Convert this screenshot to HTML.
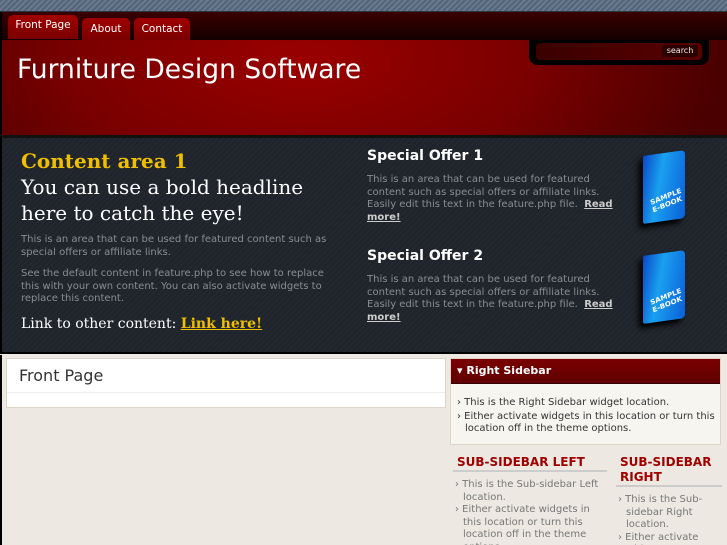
<!DOCTYPE html>
<html style="overflow:hidden;height:545px"><head><style>
*{margin:0;padding:0;box-sizing:border-box}
body{width:727px;height:545px;overflow:hidden;background:#ede9e2;font-family:"DejaVu Sans","Liberation Sans",sans-serif;position:relative}
.abs{position:absolute}
#stripe{left:0;top:0;width:727px;height:12px;background:repeating-linear-gradient(135deg,#52637a 0 2px,#6a7a8e 2px 4px);border-bottom:1px solid #2a3340}
#nav{left:0;top:12px;width:727px;height:28px;background:linear-gradient(#3a0000,#140000);border-left:2px solid #000}
.tab{position:absolute;color:#fff;font-size:10.5px;border-radius:5px 5px 0 0;background:linear-gradient(#a00000,#7a0000);text-align:center}
#head{left:0;top:40px;width:727px;height:98px;background:radial-gradient(ellipse 420px 200px at 300px 20px,#9a0000,#7a0000 55%,#4a0000 100%);border-left:2px solid #000;border-bottom:3px solid #111}
#title{left:17px;top:54px;color:#fff;font-size:26.5px}
#sbox{left:529px;top:40px;width:180px;height:25px;background:#000;border-radius:0 0 9px 9px}
#sin{left:536px;top:43px;width:166px;height:17px;background:linear-gradient(90deg,#3a0000,#5a0000);border-radius:4px}
#sbtn{left:662px;top:45px;width:36px;height:12px;background:#2a0000;color:#eee;font-size:8px;text-align:center;line-height:12px;border-radius:2px}
#feat{left:0;top:138px;width:727px;height:216px;background:repeating-linear-gradient(135deg,#23272f 0 2px,#1f232a 2px 4px);border-left:2px solid #000;border-bottom:2px solid #000}
.serif{font-family:"DejaVu Serif","Liberation Serif",serif}
.g{color:#8a8d93;font-size:10px;line-height:12.5px}
.so{color:#fff;font-weight:bold;font-size:14px}
.book{position:absolute;width:42px;height:68px;background:linear-gradient(100deg,#0a48c8,#1aa0f0 40%,#0a60d8);transform:skewY(-8deg);border-radius:2px 4px 4px 2px;box-shadow:-4px 4px 6px #000}
.book span{position:absolute;left:8px;top:40px;color:#fff;font-size:7px;font-weight:bold;line-height:8px;transform:rotate(-15deg)}
#fp{left:6px;top:358px;width:440px;height:50px;background:#fff;border:1px solid #ddd5c8}
#fp h2{font-weight:normal;font-size:16px;color:#333;padding:7px 0 0 12px;height:34px;border-bottom:1px solid #eee}
#rs{left:450px;top:358px;width:271px;height:87px;background:#f7f5f0;border:1px solid #ddd5c8}
#rsh{left:451px;top:359px;width:269px;height:25px;background:linear-gradient(#7a0000,#600000);color:#fff;font-weight:bold;font-size:11px;line-height:24px;padding-left:6px;border-bottom:1px solid #300}
.li{font-size:10px;color:#333;line-height:12px;padding-left:8px;text-indent:-8px}
.sub{color:#a00000;font-weight:bold;font-size:12px;line-height:15px}
.sl{font-size:10px;color:#777;line-height:12.5px}
.sl div{padding-left:8px;text-indent:-8px}
</style></head><body>
<div id="stripe" class="abs"></div>
<div id="nav" class="abs">
<div class="tab" style="left:6px;top:3px;width:70px;height:24px;line-height:20px">Front Page</div>
<div class="tab" style="left:80px;top:6px;width:48px;height:22px;line-height:22px">About</div>
<div class="tab" style="left:132px;top:6px;width:56px;height:22px;line-height:22px">Contact</div>
</div>
<div id="head" class="abs"></div>
<div id="title" class="abs">Furniture Design Software</div>
<div id="sbox" class="abs"></div><div id="sin" class="abs"></div><div id="sbtn" class="abs">search</div>
<div id="feat" class="abs"></div>
<div class="abs serif" style="left:21px;top:149px;color:#f0c000;font-size:20px;font-weight:bold">Content area 1</div>
<div class="abs serif" style="left:21px;top:174px;color:#fff;font-size:20px;line-height:26px;width:330px">You can use a bold headline here to catch the eye!</div>
<div class="abs g" style="left:21px;top:234px;width:320px">This is an area that can be used for featured content such as special offers or affiliate links.</div>
<div class="abs g" style="left:21px;top:268px;width:320px">See the default content in feature.php to see how to replace this with your own content. You can also activate widgets to replace this content.</div>
<div class="abs serif" style="left:21px;top:316px;color:#fff;font-size:14px">Link to other content: <u style="color:#f0c000;font-weight:bold">Link here!</u></div>
<div class="abs so" style="left:367px;top:148px">Special Offer 1</div>
<div class="abs g" style="left:367px;top:174px;width:250px">This is an area that can be used for featured content such as special offers or affiliate links. Easily edit this text in the feature.php file. &nbsp;<u style="color:#ccc;font-weight:bold">Read more!</u></div>
<div class="abs so" style="left:367px;top:248px">Special Offer 2</div>
<div class="abs g" style="left:367px;top:274px;width:250px">This is an area that can be used for featured content such as special offers or affiliate links. Easily edit this text in the feature.php file. &nbsp;<u style="color:#ccc;font-weight:bold">Read more!</u></div>
<div class="book" style="left:643px;top:153px"><span>SAMPLE<br>E-BOOK</span></div>
<div class="book" style="left:643px;top:253px"><span>SAMPLE<br>E-BOOK</span></div>
<div class="abs" style="left:0;top:355px;width:2px;height:190px;background:#000"></div>
<div id="fp" class="abs"><h2>Front Page</h2></div>
<div id="rs" class="abs"></div>
<div id="rsh" class="abs">▾ Right Sidebar</div>
<div class="abs li" style="left:457px;top:397px;width:262px">› This is the Right Sidebar widget location.</div>
<div class="abs li" style="left:457px;top:411px;width:262px">› Either activate widgets in this location or turn this location off in the theme options.</div>
<div class="abs sub" style="left:457px;top:455px">SUB-SIDEBAR LEFT</div>
<div class="abs" style="left:453px;top:470px;width:154px;height:2px;background:#ccc"></div>
<div class="abs sl" style="left:455px;top:479px;width:150px"><div>› This is the Sub-sidebar Left location.</div><div>› Either activate widgets in this location or turn this location off in the theme options.</div></div>
<div class="abs sub" style="left:620px;top:455px;width:100px">SUB-SIDEBAR RIGHT</div>
<div class="abs" style="left:616px;top:485px;width:106px;height:2px;background:#ccc"></div>
<div class="abs sl" style="left:618px;top:494px;width:100px"><div>› This is the Sub-sidebar Right location.</div><div>› Either activate widgets</div></div>
</body></html>
